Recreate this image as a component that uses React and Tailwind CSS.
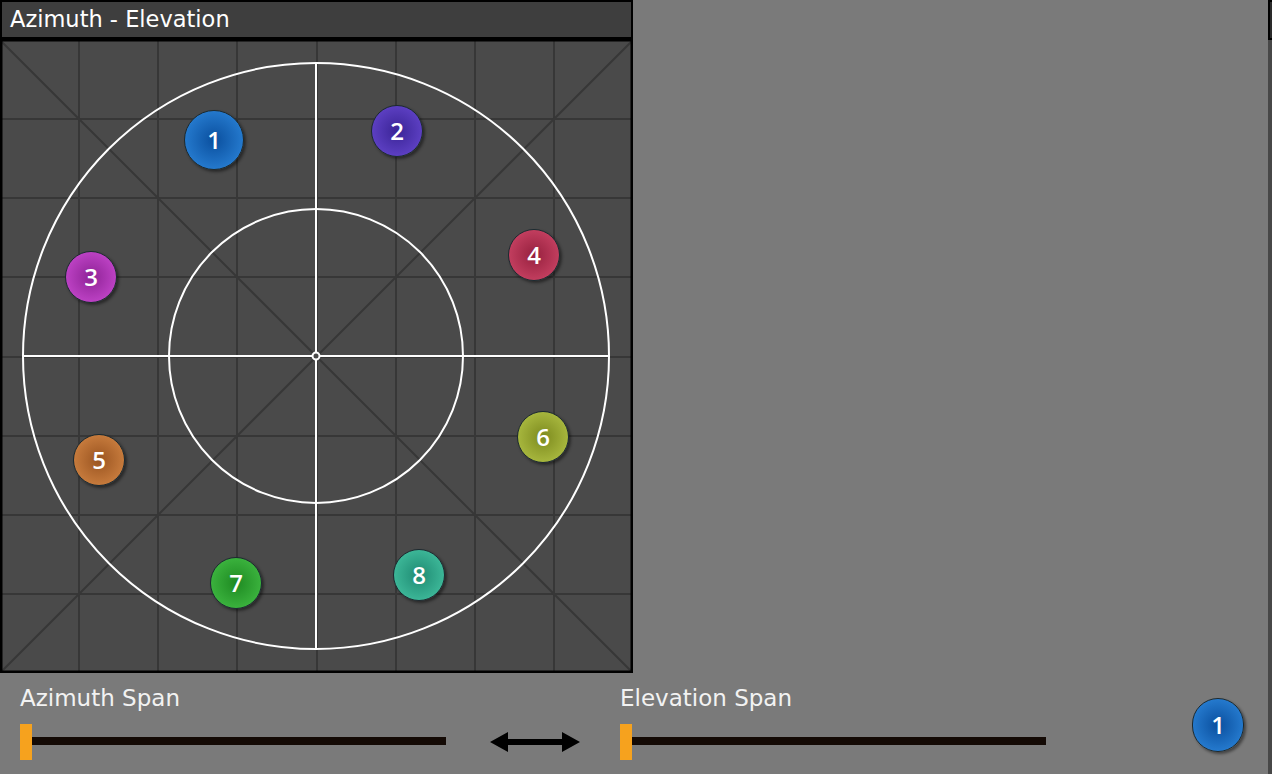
import React from "react";

const balls = [
  { n: 1, x: 214, y: 100, size: 60, from: "#0a4f9e", to: "#2f8ae0" },
  { n: 2, x: 397, y: 91, size: 52, from: "#3a2496", to: "#6a4ad4" },
  { n: 3, x: 91, y: 237, size: 52, from: "#8e2296", to: "#cf4ed6" },
  { n: 4, x: 534, y: 215, size: 52, from: "#96203e", to: "#d44a6c" },
  { n: 5, x: 99, y: 420, size: 52, from: "#9a5420", to: "#d88a48" },
  { n: 6, x: 543, y: 397, size: 52, from: "#7c8a1e", to: "#b8c84a" },
  { n: 7, x: 236, y: 543, size: 52, from: "#1e8a22", to: "#46c248" },
  { n: 8, x: 419, y: 535, size: 52, from: "#1e8a72", to: "#48c8a6" },
];

const Ball = ({ n, size, from, to, style }) => (
  <div
    className="absolute flex items-center justify-center rounded-full border border-[#1c2a30] text-white text-[24px] font-semibold shadow-[2px_2px_3px_rgba(0,0,0,0.45)] [font-family:'Open_Sans',sans-serif]"
    style={{
      width: size,
      height: size,
      background: `radial-gradient(circle at 50% 50%, ${from} 0%, ${to} 100%)`,
      ...style,
    }}
  >
    {n}
  </div>
);

const Slider = ({ label }) => (
  <div className="flex flex-col w-[426px]">
    <div className="text-[23px] text-[#f2f2f2] h-[30px] leading-[30px]">{label}</div>
    <div className="relative h-[36px] mt-[11px]">
      <div className="absolute left-[6px] right-0 top-[13px] h-[8px] bg-[#140a05]" />
      <div className="absolute left-0 top-0 w-[12px] h-[36px] bg-[#f6a21e]" />
    </div>
  </div>
);

const Plot = () => {
  const step = 633 / 8;
  const lines = [1, 2, 3, 4, 5, 6, 7].map((i) => Math.round(i * step));
  return (
    <svg width="633" height="633" viewBox="0 0 633 633" className="block">
      <rect x="0" y="0" width="633" height="633" fill="#4a4a4a" />
      {lines.map((p) => (
        <g key={p} stroke="#373737" strokeWidth="2">
          <line x1={p} y1="0" x2={p} y2="633" />
          <line x1="0" y1={p} x2="633" y2={p} />
        </g>
      ))}
      <line x1="0" y1="0" x2="633" y2="633" stroke="#373737" strokeWidth="2" />
      <line x1="633" y1="0" x2="0" y2="633" stroke="#373737" strokeWidth="2" />
      <g stroke="#ffffff" strokeWidth="2" fill="none">
        <circle cx="316" cy="316" r="293" />
        <circle cx="316" cy="316" r="147" />
        <line x1="316" y1="23" x2="316" y2="609" />
        <line x1="23" y1="316" x2="609" y2="316" />
        <circle cx="316" cy="316" r="3.5" fill="#4a4a4a" />
      </g>
      <rect x="1" y="0" width="631" height="632" fill="none" stroke="#000" strokeWidth="3" />
    </svg>
  );
};

export default function App() {
  return (
    <div className="w-[1272px] h-[774px] bg-[#7a7a7a] overflow-hidden relative [font-family:'DejaVu_Sans',sans-serif]">
      <div className="flex">
        <div className="w-[633px] flex flex-col">
          <div className="h-[40px] bg-[#3e3e3e] border-2 border-b-[3px] border-black flex items-center px-[8px] text-white text-[22.5px]">
            Azimuth - Elevation
          </div>
          <div className="relative">
            <Plot />
            {balls.map((b) => (
              <Ball
                key={b.n}
                {...b}
                style={{ left: b.x - b.size / 2, top: b.y - b.size / 2 }}
              />
            ))}
          </div>
        </div>
        <div className="flex-1" />
        <div className="w-[4px] h-[774px] flex flex-col">
          <div className="h-[40px] bg-[#2a2a2a] border-l-[2px] border-y-[2px] border-black" />
          <div className="flex-1 bg-[#474747]" />
        </div>
      </div>
      <div className="absolute left-0 top-[673px] w-[1268px] h-[101px] flex items-start pl-[20px] pt-[10px]">
        <Slider label="Azimuth Span" />
        <div className="w-[174px] flex justify-center pt-[47px] pl-[4px]">
          <svg width="90" height="24" viewBox="0 0 90 24">
            <polygon points="0,12 18,2 18,9 72,9 72,2 90,12 72,22 72,15 18,15 18,22" fill="#000" />
          </svg>
        </div>
        <Slider label="Elevation Span" />
        <div className="flex-1 flex justify-end pr-[24px] pt-[15px]">
          <Ball n={1} size={52} from="#0a4f9e" to="#2f8ae0" style={{ position: "relative", height: 54 }} />
        </div>
      </div>
    </div>
  );
}
